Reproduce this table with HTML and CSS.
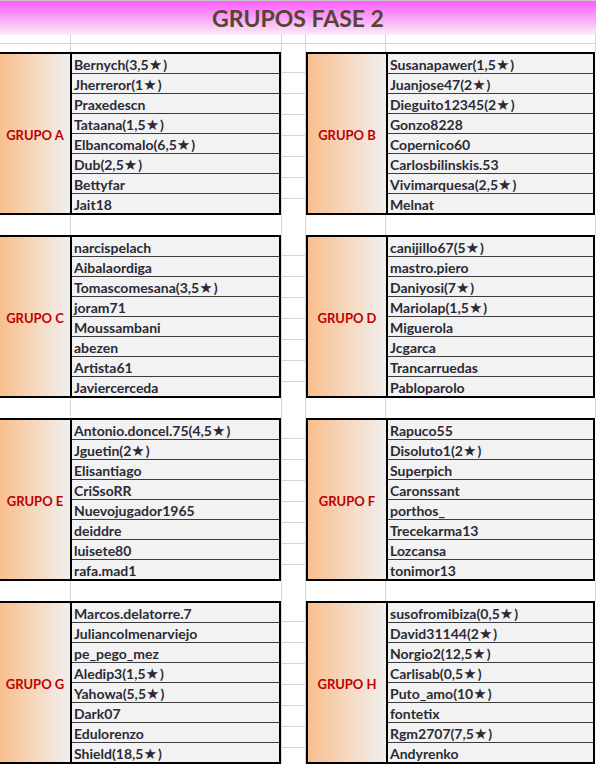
FILE: index.html
```html
<!DOCTYPE html>
<html>
<head>
<meta charset="utf-8">
<link rel="stylesheet" href="styles.css">
</head>
<body>
<div class="sheet">
  <div class="title">GRUPOS FASE 2</div>
  <div class="blank r1"><span></span><span></span><span></span><span></span><span></span></div>
  <div class="blank r2"><span></span><span></span><span></span><span></span><span></span></div>

  <div class="block">
    <div class="group left">
      <div class="label">GRUPO A</div>
      <div class="names">
        <div class="name">Bernych(3,5<span class="star">★</span>)</div>
        <div class="name">Jherreror(1<span class="star">★</span>)</div>
        <div class="name">Praxedescn</div>
        <div class="name">Tataana(1,5<span class="star">★</span>)</div>
        <div class="name">Elbancomalo(6,5<span class="star">★</span>)</div>
        <div class="name">Dub(2,5<span class="star">★</span>)</div>
        <div class="name">Bettyfar</div>
        <div class="name">Jait18</div>
      </div>
    </div>
    <div class="spacer"></div>
    <div class="group right">
      <div class="label">GRUPO B</div>
      <div class="names">
        <div class="name">Susanapawer(1,5<span class="star">★</span>)</div>
        <div class="name">Juanjose47(2<span class="star">★</span>)</div>
        <div class="name">Dieguito12345(2<span class="star">★</span>)</div>
        <div class="name">Gonzo8228</div>
        <div class="name">Copernico60</div>
        <div class="name">Carlosbilinskis.53</div>
        <div class="name">Vivimarquesa(2,5<span class="star">★</span>)</div>
        <div class="name">Melnat</div>
      </div>
    </div>
    <div class="edge"></div>
  </div>
  <div class="blank gap"><span></span><span></span><span></span><span></span><span></span></div>

  <div class="block">
    <div class="group left">
      <div class="label">GRUPO C</div>
      <div class="names">
        <div class="name">narcispelach</div>
        <div class="name">Aibalaordiga</div>
        <div class="name">Tomascomesana(3,5<span class="star">★</span>)</div>
        <div class="name">joram71</div>
        <div class="name">Moussambani</div>
        <div class="name">abezen</div>
        <div class="name">Artista61</div>
        <div class="name">Javiercerceda</div>
      </div>
    </div>
    <div class="spacer"></div>
    <div class="group right">
      <div class="label">GRUPO D</div>
      <div class="names">
        <div class="name">canijillo67(5<span class="star">★</span>)</div>
        <div class="name">mastro.piero</div>
        <div class="name">Daniyosi(7<span class="star">★</span>)</div>
        <div class="name">Mariolap(1,5<span class="star">★</span>)</div>
        <div class="name">Miguerola</div>
        <div class="name">Jcgarca</div>
        <div class="name">Trancarruedas</div>
        <div class="name">Pabloparolo</div>
      </div>
    </div>
    <div class="edge"></div>
  </div>
  <div class="blank gap"><span></span><span></span><span></span><span></span><span></span></div>

  <div class="block">
    <div class="group left">
      <div class="label">GRUPO E</div>
      <div class="names">
        <div class="name">Antonio.doncel.75(4,5<span class="star">★</span>)</div>
        <div class="name">Jguetin(2<span class="star">★</span>)</div>
        <div class="name">Elisantiago</div>
        <div class="name">CriSsoRR</div>
        <div class="name">Nuevojugador1965</div>
        <div class="name">deiddre</div>
        <div class="name">luisete80</div>
        <div class="name">rafa.mad1</div>
      </div>
    </div>
    <div class="spacer"></div>
    <div class="group right">
      <div class="label">GRUPO F</div>
      <div class="names">
        <div class="name">Rapuco55</div>
        <div class="name">Disoluto1(2<span class="star">★</span>)</div>
        <div class="name">Superpich</div>
        <div class="name">Caronssant</div>
        <div class="name">porthos_</div>
        <div class="name">Trecekarma13</div>
        <div class="name">Lozcansa</div>
        <div class="name">tonimor13</div>
      </div>
    </div>
    <div class="edge"></div>
  </div>
  <div class="blank gap"><span></span><span></span><span></span><span></span><span></span></div>

  <div class="block">
    <div class="group left">
      <div class="label">GRUPO G</div>
      <div class="names">
        <div class="name">Marcos.delatorre.7</div>
        <div class="name">Juliancolmenarviejo</div>
        <div class="name">pe_pego_mez</div>
        <div class="name">Aledip3(1,5<span class="star">★</span>)</div>
        <div class="name">Yahowa(5,5<span class="star">★</span>)</div>
        <div class="name">Dark07</div>
        <div class="name">Edulorenzo</div>
        <div class="name">Shield(18,5<span class="star">★</span>)</div>
      </div>
    </div>
    <div class="spacer"></div>
    <div class="group right">
      <div class="label">GRUPO H</div>
      <div class="names">
        <div class="name">susofromibiza(0,5<span class="star">★</span>)</div>
        <div class="name">David31144(2<span class="star">★</span>)</div>
        <div class="name">Norgio2(12,5<span class="star">★</span>)</div>
        <div class="name">Carlisab(0,5<span class="star">★</span>)</div>
        <div class="name">Puto_amo(10<span class="star">★</span>)</div>
        <div class="name">fontetix</div>
        <div class="name">Rgm2707(7,5<span class="star">★</span>)</div>
        <div class="name">Andyrenko</div>
      </div>
    </div>
    <div class="edge"></div>
  </div>
</div>
</body>
</html>
```

FILE: styles.css
```css
* { box-sizing: border-box; }
html, body { margin: 0; padding: 0; background: #ffffff; }
body { width: 596px; height: 765px; overflow: hidden; font-family: Lato, "Open Sans", "Liberation Sans", sans-serif; }

.sheet { width: 596px; }

.title {
  height: 35px;
  border-top: 1px solid #c8c8c8;
  background: linear-gradient(to bottom, #ff5cff 0%, #fb9cf8 45%, #f8eef8 100%);
  color: #554434;
  font-weight: 700;
  font-size: 23px;
  line-height: 34px;
  text-align: center;
}

.blank {
  display: grid;
  grid-template-columns: 71px 211px 24px 80px 210px;
  border-bottom: 1px solid #d6d6d6;
}
.blank span { border-right: 1px solid #d6d6d6; }
.r1 { height: 9px; }
.r2 { height: 8px; border-bottom: none; }
.gap { height: 20px; border-bottom: none; }

.block {
  display: flex;
  height: 163px;
}

.group {
  display: flex;
  border-top: 2px solid #000;
  border-bottom: 2px solid #000;
  border-right: 2px solid #000;
}
.group.left { width: 281px; }
.group.right { width: 289px; border-left: 2px solid #000; }

.label {
  display: flex;
  align-items: center;
  justify-content: center;
  background: linear-gradient(to right, #f9bf8d 0%, #f5d8bf 50%, #f1efee 100%);
  color: #c00000;
  font-weight: 700;
  font-size: 13px;
  border-right: 2px solid #000;
  padding-top: 2px;
}
.left .label { width: 72px; }
.right .label { width: 80px; }

.names { flex: 1; background: #f2f2f2; }
.name {
  height: 20px;
  border-bottom: 1px solid #3c3c3c;
  padding-left: 2px;
  padding-top: 2px;
  line-height: 18px;
  font-weight: 700;
  font-size: 14px;
  color: #2b2b36;
  white-space: nowrap;
}
.name:last-child { border-bottom: none; height: 19px; }
.star { font-family: "DejaVu Sans", sans-serif; font-size: 15px; margin-right: 1px; }

.spacer {
  width: 25px;
  border-left: 1px solid #d6d6d6;
  border-right: 1px solid #d6d6d6;
  background: repeating-linear-gradient(to bottom, transparent 0 20px, #d6d6d6 20px 21px);
}
.edge { flex: 1; }
```
